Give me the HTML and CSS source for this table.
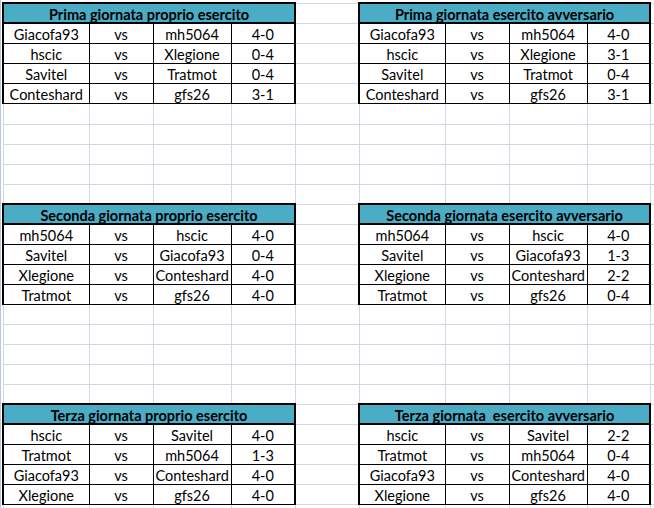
FILE: index.html
```html
<!DOCTYPE html>
<html lang="it">
<head>
<meta charset="utf-8">
<title>Giornate</title>
<link rel="stylesheet" href="styles.css">
</head>
<body>
<div class="sheet">
<table class="grid">
<colgroup>
<col class="c-name"><col class="c-vs"><col class="c-opp"><col class="c-res">
<col class="c-gap">
<col class="c-name"><col class="c-vs"><col class="c-opp"><col class="c-res2">
<col class="c-rest">
</colgroup>
<tbody>
<tr><td class="hd" colspan="4">Prima giornata proprio esercito</td><td></td><td class="hd" colspan="4">Prima giornata esercito avversario</td><td></td></tr>
<tr><td class="g l">Giacofa93</td><td class="g">vs</td><td class="g">mh5064</td><td class="g r">4-0</td><td></td><td class="g l">Giacofa93</td><td class="g">vs</td><td class="g">mh5064</td><td class="g r">4-0</td><td></td></tr>
<tr><td class="g l">hscic</td><td class="g">vs</td><td class="g">Xlegione</td><td class="g r">0-4</td><td></td><td class="g l">hscic</td><td class="g">vs</td><td class="g">Xlegione</td><td class="g r">3-1</td><td></td></tr>
<tr><td class="g l">Savitel</td><td class="g">vs</td><td class="g">Tratmot</td><td class="g r">0-4</td><td></td><td class="g l">Savitel</td><td class="g">vs</td><td class="g">Tratmot</td><td class="g r">0-4</td><td></td></tr>
<tr><td class="g l">Conteshard</td><td class="g">vs</td><td class="g">gfs26</td><td class="g r">3-1</td><td></td><td class="g l">Conteshard</td><td class="g">vs</td><td class="g">gfs26</td><td class="g r">3-1</td><td></td></tr>
<tr class="tall"><td></td><td></td><td></td><td></td><td></td><td></td><td></td><td></td><td></td><td></td></tr>
<tr><td></td><td></td><td></td><td></td><td></td><td></td><td></td><td></td><td></td><td></td></tr>
<tr><td></td><td></td><td></td><td></td><td></td><td></td><td></td><td></td><td></td><td></td></tr>
<tr><td></td><td></td><td></td><td></td><td></td><td></td><td></td><td></td><td></td><td></td></tr>
<tr><td></td><td></td><td></td><td></td><td></td><td></td><td></td><td></td><td></td><td></td></tr>
<tr><td class="hd" colspan="4">Seconda giornata proprio esercito</td><td></td><td class="hd" colspan="4">Seconda giornata esercito avversario</td><td></td></tr>
<tr><td class="g l">mh5064</td><td class="g">vs</td><td class="g">hscic</td><td class="g r">4-0</td><td></td><td class="g l">mh5064</td><td class="g">vs</td><td class="g">hscic</td><td class="g r">4-0</td><td></td></tr>
<tr><td class="g l">Savitel</td><td class="g">vs</td><td class="g">Giacofa93</td><td class="g r">0-4</td><td></td><td class="g l">Savitel</td><td class="g">vs</td><td class="g">Giacofa93</td><td class="g r">1-3</td><td></td></tr>
<tr><td class="g l">Xlegione</td><td class="g">vs</td><td class="g">Conteshard</td><td class="g r">4-0</td><td></td><td class="g l">Xlegione</td><td class="g">vs</td><td class="g">Conteshard</td><td class="g r">2-2</td><td></td></tr>
<tr><td class="g l">Tratmot</td><td class="g">vs</td><td class="g">gfs26</td><td class="g r">4-0</td><td></td><td class="g l">Tratmot</td><td class="g">vs</td><td class="g">gfs26</td><td class="g r">0-4</td><td></td></tr>
<tr><td></td><td></td><td></td><td></td><td></td><td></td><td></td><td></td><td></td><td></td></tr>
<tr><td></td><td></td><td></td><td></td><td></td><td></td><td></td><td></td><td></td><td></td></tr>
<tr><td></td><td></td><td></td><td></td><td></td><td></td><td></td><td></td><td></td><td></td></tr>
<tr><td></td><td></td><td></td><td></td><td></td><td></td><td></td><td></td><td></td><td></td></tr>
<tr><td></td><td></td><td></td><td></td><td></td><td></td><td></td><td></td><td></td><td></td></tr>
<tr><td class="hd" colspan="4">Terza giornata proprio esercito</td><td></td><td class="hd" colspan="4">Terza giornata&nbsp; esercito avversario</td><td></td></tr>
<tr><td class="g l">hscic</td><td class="g">vs</td><td class="g">Savitel</td><td class="g r">4-0</td><td></td><td class="g l">hscic</td><td class="g">vs</td><td class="g">Savitel</td><td class="g r">2-2</td><td></td></tr>
<tr><td class="g l">Tratmot</td><td class="g">vs</td><td class="g">mh5064</td><td class="g r">1-3</td><td></td><td class="g l">Tratmot</td><td class="g">vs</td><td class="g">mh5064</td><td class="g r">0-4</td><td></td></tr>
<tr><td class="g l">Giacofa93</td><td class="g">vs</td><td class="g">Conteshard</td><td class="g r">4-0</td><td></td><td class="g l">Giacofa93</td><td class="g">vs</td><td class="g">Conteshard</td><td class="g r">4-0</td><td></td></tr>
<tr><td class="g l">Xlegione</td><td class="g">vs</td><td class="g">gfs26</td><td class="g r">4-0</td><td></td><td class="g l">Xlegione</td><td class="g">vs</td><td class="g">gfs26</td><td class="g r">4-0</td><td></td></tr>
<tr><td></td><td></td><td></td><td></td><td></td><td></td><td></td><td></td><td></td><td></td></tr>
</tbody>
</table>
</div>
</body>
</html>
```

FILE: styles.css
```css
html, body {
  margin: 0;
  padding: 0;
  background: #ffffff;
  overflow: hidden;
}

.sheet {
  width: 654px;
  height: 508px;
  overflow: hidden;
  padding: 2px 0 0 1px;
  box-sizing: border-box;
  border-left: 1px solid #b8c8da;
}

.grid {
  border-collapse: collapse;
  table-layout: fixed;
  width: 711px;
  font-family: Lato, "Open Sans", "Liberation Sans", sans-serif;
  font-size: 14.5px;
  color: #000000;
}

.c-name { width: 86px; }
.c-vs { width: 64px; }
.c-opp { width: 78px; }
.c-res { width: 64px; }
.c-res2 { width: 63px; }
.c-gap { width: 64px; }
.c-rest { width: 64px; }

.grid tr {
  height: 20px;
}

.grid tr.tall {
  height: 21px;
}

.grid td {
  border: 1px solid #d0d7e5;
  padding: 3px 2px 0;
  text-align: center;
  vertical-align: middle;
  white-space: nowrap;
  overflow: hidden;
  line-height: 15px;
}

.grid td.hd {
  background: #4bacc6;
  border: 2px solid #000000;
  font-weight: 700;
}

.grid td.g {
  border: 1px solid #000000;
}

.grid td.g.l {
  border-left: 2px solid #000000;
}

.grid td.g.r {
  border-right: 2px solid #000000;
}
```
